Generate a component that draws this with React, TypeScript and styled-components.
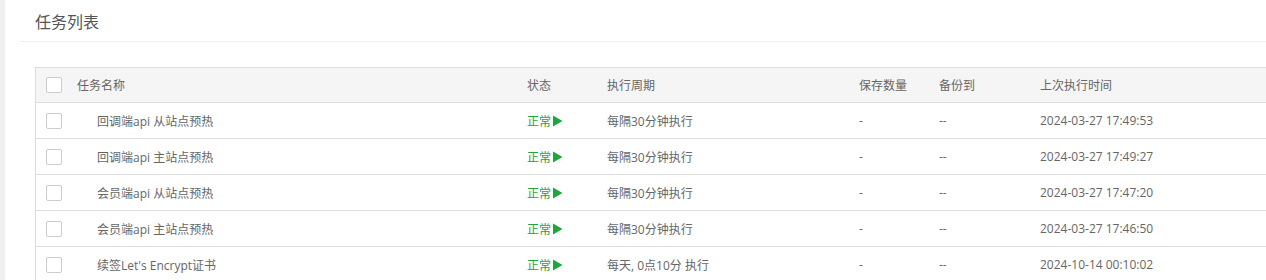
import styled, { createGlobalStyle } from "styled-components";

const GlobalStyle = createGlobalStyle`
  html, body {
    margin: 0;
    padding: 0;
    background: #f0f0f0;
    font-family: "Open Sans", "Noto Sans CJK SC", sans-serif;
    font-size: 12px;
    color: #666;
    overflow: hidden;
  }
`;

const Page = styled.div`
  margin-left: 5px;
  height: 280px;
  background: #fff;
  overflow: hidden;
`;

const TitleBar = styled.div`
  height: 41px;
  margin: 0 0 0 15px;
  padding-left: 15px;
  border-bottom: 1px solid #eee;
  display: flex;
  align-items: center;
  font-size: 16px;
  color: #555;
`;

const TableWrap = styled.div`
  margin: 25px 0 0 30px;
  overflow: hidden;
`;

const Table = styled.table`
  width: 1500px;
  border-collapse: collapse;
  table-layout: fixed;
`;

const Head = styled.thead`
  background: #f5f5f5;
`;

// $w is the full column width, padding included
const Th = styled.th<{ $w?: number }>`
  ${(p) => (p.$w ? `width: ${p.$w - 20}px;` : "")}
  height: 34px;
  padding: 0 10px;
  text-align: left;
  font-weight: normal;
  color: #666;
  border-top: 1px solid #ddd;
  border-bottom: 1px solid #ddd;
  &:first-child {
    border-left: 1px solid #ddd;
  }
`;

const Td = styled.td<{ $indent?: boolean }>`
  height: 35px;
  padding: 0 10px 0 ${(p) => (p.$indent ? 30 : 10)}px;
  border-bottom: 1px solid #ddd;
  white-space: nowrap;
  color: #666;
  &:first-child {
    border-left: 1px solid #ddd;
  }
`;

const Check = styled.span`
  display: block;
  width: 14px;
  height: 14px;
  border: 1px solid #ccc;
  border-radius: 2px;
  background: #fff;
`;

const Status = styled.span`
  display: inline-flex;
  align-items: center;
  gap: 1px;
  color: #20a53a;
`;

const PlayIcon = () => (
  <svg width="11" height="12" viewBox="0 0 11 12">
    <path d="M1 0.5 L10.5 6 L1 11.5 Z" fill="#20a53a" />
  </svg>
);

type Task = {
  name: string;
  cycle: string;
  keep: string;
  backup: string;
  last: string;
};

const tasks: Task[] = [
  { name: "回调端api 从站点预热", cycle: "每隔30分钟执行", keep: "-", backup: "--", last: "2024-03-27 17:49:53" },
  { name: "回调端api 主站点预热", cycle: "每隔30分钟执行", keep: "-", backup: "--", last: "2024-03-27 17:49:27" },
  { name: "会员端api 从站点预热", cycle: "每隔30分钟执行", keep: "-", backup: "--", last: "2024-03-27 17:47:20" },
  { name: "会员端api 主站点预热", cycle: "每隔30分钟执行", keep: "-", backup: "--", last: "2024-03-27 17:46:50" },
  { name: "续签Let's Encrypt证书", cycle: "每天, 0点10分 执行", keep: "-", backup: "--", last: "2024-10-14 00:10:02" },
];

export default function App() {
  return (
    <>
      <GlobalStyle />
      <Page>
        <TitleBar>任务列表</TitleBar>
        <TableWrap>
          <Table>
            <Head>
              <tr>
                <Th $w={31}>
                  <Check />
                </Th>
                <Th $w={450}>任务名称</Th>
                <Th $w={80}>状态</Th>
                <Th $w={252}>执行周期</Th>
                <Th $w={80}>保存数量</Th>
                <Th $w={101}>备份到</Th>
                <Th>上次执行时间</Th>
              </tr>
            </Head>
            <tbody>
              {tasks.map((t) => (
                <tr key={t.name}>
                  <Td>
                    <Check />
                  </Td>
                  <Td $indent>{t.name}</Td>
                  <Td>
                    <Status>
                      正常
                      <PlayIcon />
                    </Status>
                  </Td>
                  <Td>{t.cycle}</Td>
                  <Td>{t.keep}</Td>
                  <Td>{t.backup}</Td>
                  <Td>{t.last}</Td>
                </tr>
              ))}
            </tbody>
          </Table>
        </TableWrap>
      </Page>
    </>
  );
}
